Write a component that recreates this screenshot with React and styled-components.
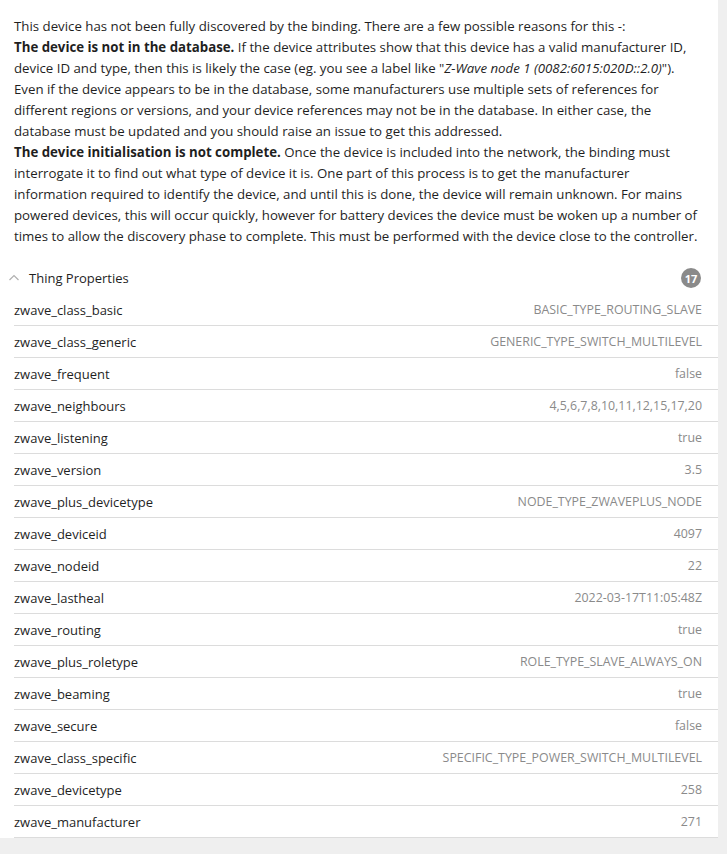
import React from "react";
import styled, { createGlobalStyle } from "styled-components";

const Global = createGlobalStyle`
  html, body { margin: 0; padding: 0; background: #efefef; }
  body { font-family: "Open Sans", "Noto Sans", sans-serif; color: #1f1f1f; }
`;

const Card = styled.div`
  width: 718px;
  background: #fff;
`;

const Intro = styled.div`
  padding: 16px 16px 15px 14px;
  font-size: 13.25px;
  line-height: 21px;
`;

const Line = styled.p`
  margin: 0;
`;

const Header = styled.div`
  display: flex;
  align-items: center;
  height: 32px;
  padding: 0 16px 0 8px;
  font-size: 13px;
`;

const Chevron = styled.svg`
  width: 12px;
  height: 12px;
  margin-right: 9px;
  flex: none;
`;

const Title = styled.span`
  flex: 1;
`;

const Badge = styled.span`
  width: 20px;
  height: 20px;
  border-radius: 50%;
  background: #8a8a8a;
  color: #fff;
  font-size: 11px;
  font-weight: 700;
  display: flex;
  align-items: center;
  justify-content: center;
  margin-right: 1px;
`;

const List = styled.div`
  padding-left: 14px;
`;

const Row = styled.div`
  display: flex;
  align-items: center;
  justify-content: space-between;
  height: 31px;
  border-bottom: 1px solid #dcdcdc;
  padding-right: 16px;
`;

const Key = styled.span`
  font-size: 13px;
  color: #1f1f1f;
`;

const Value = styled.span`
  font-size: 12.4px;
  color: #8a8a8a;
`;

const props = [
  ["zwave_class_basic", "BASIC_TYPE_ROUTING_SLAVE"],
  ["zwave_class_generic", "GENERIC_TYPE_SWITCH_MULTILEVEL"],
  ["zwave_frequent", "false"],
  ["zwave_neighbours", "4,5,6,7,8,10,11,12,15,17,20"],
  ["zwave_listening", "true"],
  ["zwave_version", "3.5"],
  ["zwave_plus_devicetype", "NODE_TYPE_ZWAVEPLUS_NODE"],
  ["zwave_deviceid", "4097"],
  ["zwave_nodeid", "22"],
  ["zwave_lastheal", "2022-03-17T11:05:48Z"],
  ["zwave_routing", "true"],
  ["zwave_plus_roletype", "ROLE_TYPE_SLAVE_ALWAYS_ON"],
  ["zwave_beaming", "true"],
  ["zwave_secure", "false"],
  ["zwave_class_specific", "SPECIFIC_TYPE_POWER_SWITCH_MULTILEVEL"],
  ["zwave_devicetype", "258"],
  ["zwave_manufacturer", "271"],
];

export default function App() {
  return (
    <>
      <Global />
      <Card>
        <Intro>
          <Line>This device has not been fully discovered by the binding. There are a few possible reasons for this -:</Line>
          <Line>
            <b>The device is not in the database.</b> If the device attributes show that this device has a valid manufacturer ID, device ID and type, then this is likely the case (eg. you see a label like "<i>Z-Wave node 1 (0082:6015:020D::2.0)</i>"). Even if the device appears to be in the database, some manufacturers use multiple sets of references for different regions or versions, and your device references may not be in the database. In either case, the database must be updated and you should raise an issue to get this addressed.
          </Line>
          <Line>
            <b>The device initialisation is not complete.</b> Once the device is included into the network, the binding must interrogate it to find out what type of device it is. One part of this process is to get the manufacturer information required to identify the device, and until this is done, the device will remain unknown. For mains powered devices, this will occur quickly, however for battery devices the device must be woken up a number of times to allow the discovery phase to complete. This must be performed with the device close to the controller.
          </Line>
        </Intro>
        <Header>
          <Chevron viewBox="0 0 12 12">
            <path d="M1.5 8 L6 3.5 L10.5 8" fill="none" stroke="#b0b0b0" strokeWidth="1.2" />
          </Chevron>
          <Title>Thing Properties</Title>
          <Badge>17</Badge>
        </Header>
        <List>
          {props.map(([k, v]) => (
            <Row key={k}>
              <Key>{k}</Key>
              <Value>{v}</Value>
            </Row>
          ))}
        </List>
      </Card>
    </>
  );
}
